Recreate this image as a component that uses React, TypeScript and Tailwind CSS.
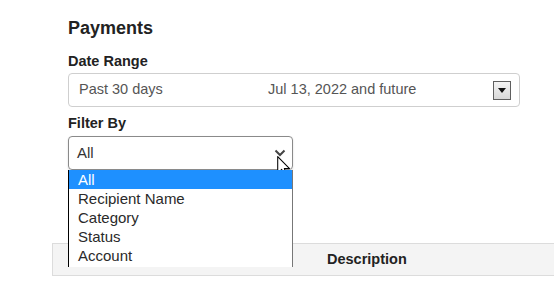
import React from "react";

const filterOptions = ["All", "Recipient Name", "Category", "Status", "Account"];

function Chevron() {
  return (
    <svg width="12" height="8" viewBox="0 0 12 8" className="text-[#444]">
      <path d="M1.5 1.5 L6 6 L10.5 1.5" fill="none" stroke="currentColor" strokeWidth="2" />
    </svg>
  );
}

function Cursor() {
  return (
    <svg width="14" height="22" viewBox="0 0 13 21" className="pointer-events-none absolute left-[209px] top-[20px]">
      <path
        d="M0.5 0.5 L0.5 16.5 L4.3 12.8 L7 19.5 L9.4 18.5 L6.8 12 L11.8 12 Z"
        fill="#fff"
        stroke="#000"
        strokeWidth="1"
        strokeLinejoin="round"
      />
    </svg>
  );
}

export default function App() {
  return (
    <div
      className="h-[282px] w-[554px] overflow-hidden bg-white text-[#222]"
      style={{ fontFamily: '"Liberation Sans", Arial, sans-serif' }}
    >
      <div className="pl-[52px]">
        {/* Form */}
        <div className="px-4 pt-[18px]">
          <h1 className="h-[20px] text-[18px] font-bold leading-[20px] text-[#222]">Payments</h1>

          <div className="mt-[15px] mb-[3px] h-[17px] text-[14.5px] font-bold leading-[17px]">Date Range</div>
          <div className="flex h-[34px] w-[452px] items-center rounded-[4px] border border-[#cfcfcf] pl-[10px] pr-[8px] text-[14.5px] text-[#555]">
            <span className="w-[189px]">Past 30 days</span>
            <span className="flex-1">Jul 13, 2022 and future</span>
            <span className="flex h-[19px] w-[18px] items-center justify-center border border-[#5f5f5f] bg-gradient-to-b from-[#f4f4f4] to-[#d8d8d8]">
              <svg width="8" height="5" viewBox="0 0 8 5">
                <path d="M0 0 L8 0 L4 5 Z" fill="#111" />
              </svg>
            </span>
          </div>

          <div className="mt-[8px] mb-[4px] h-[17px] text-[14.5px] font-bold leading-[17px]">Filter By</div>
          <div className="relative w-[225px]">
            <div className="flex h-[34px] items-center justify-between rounded-[4px] border border-[#8a8a8a] pl-[8px] pr-[6px] text-[15px] text-[#333] shadow-[0_1px_2px_rgba(0,0,0,0.15)]">
              <span>All</span>
              <Chevron />
            </div>
            <Cursor />
            <ul className="absolute left-0 top-[34px] z-10 h-[97px] w-[225px] border-l border-r border-l-black border-r-[#777] bg-white text-[15px] leading-[19px] text-[#2a2a2a]">
              {filterOptions.map((opt, i) => (
                <li
                  key={opt}
                  className={
                    i === 0
                      ? "h-[19px] bg-[#1e90ff] pl-[9px] text-white"
                      : "h-[19px] pl-[9px]"
                  }
                >
                  {opt}
                </li>
              ))}
            </ul>
          </div>
        </div>

        {/* Table */}
        <div className="mt-[73px]">
          <div className="flex h-[33px] items-center border-y border-l border-[#dcdcdc] bg-[#f4f4f4] text-[14.5px] font-bold text-[#222]">
            <div className="w-[274px]" />
            <div>Description</div>
          </div>
        </div>
      </div>
    </div>
  );
}
